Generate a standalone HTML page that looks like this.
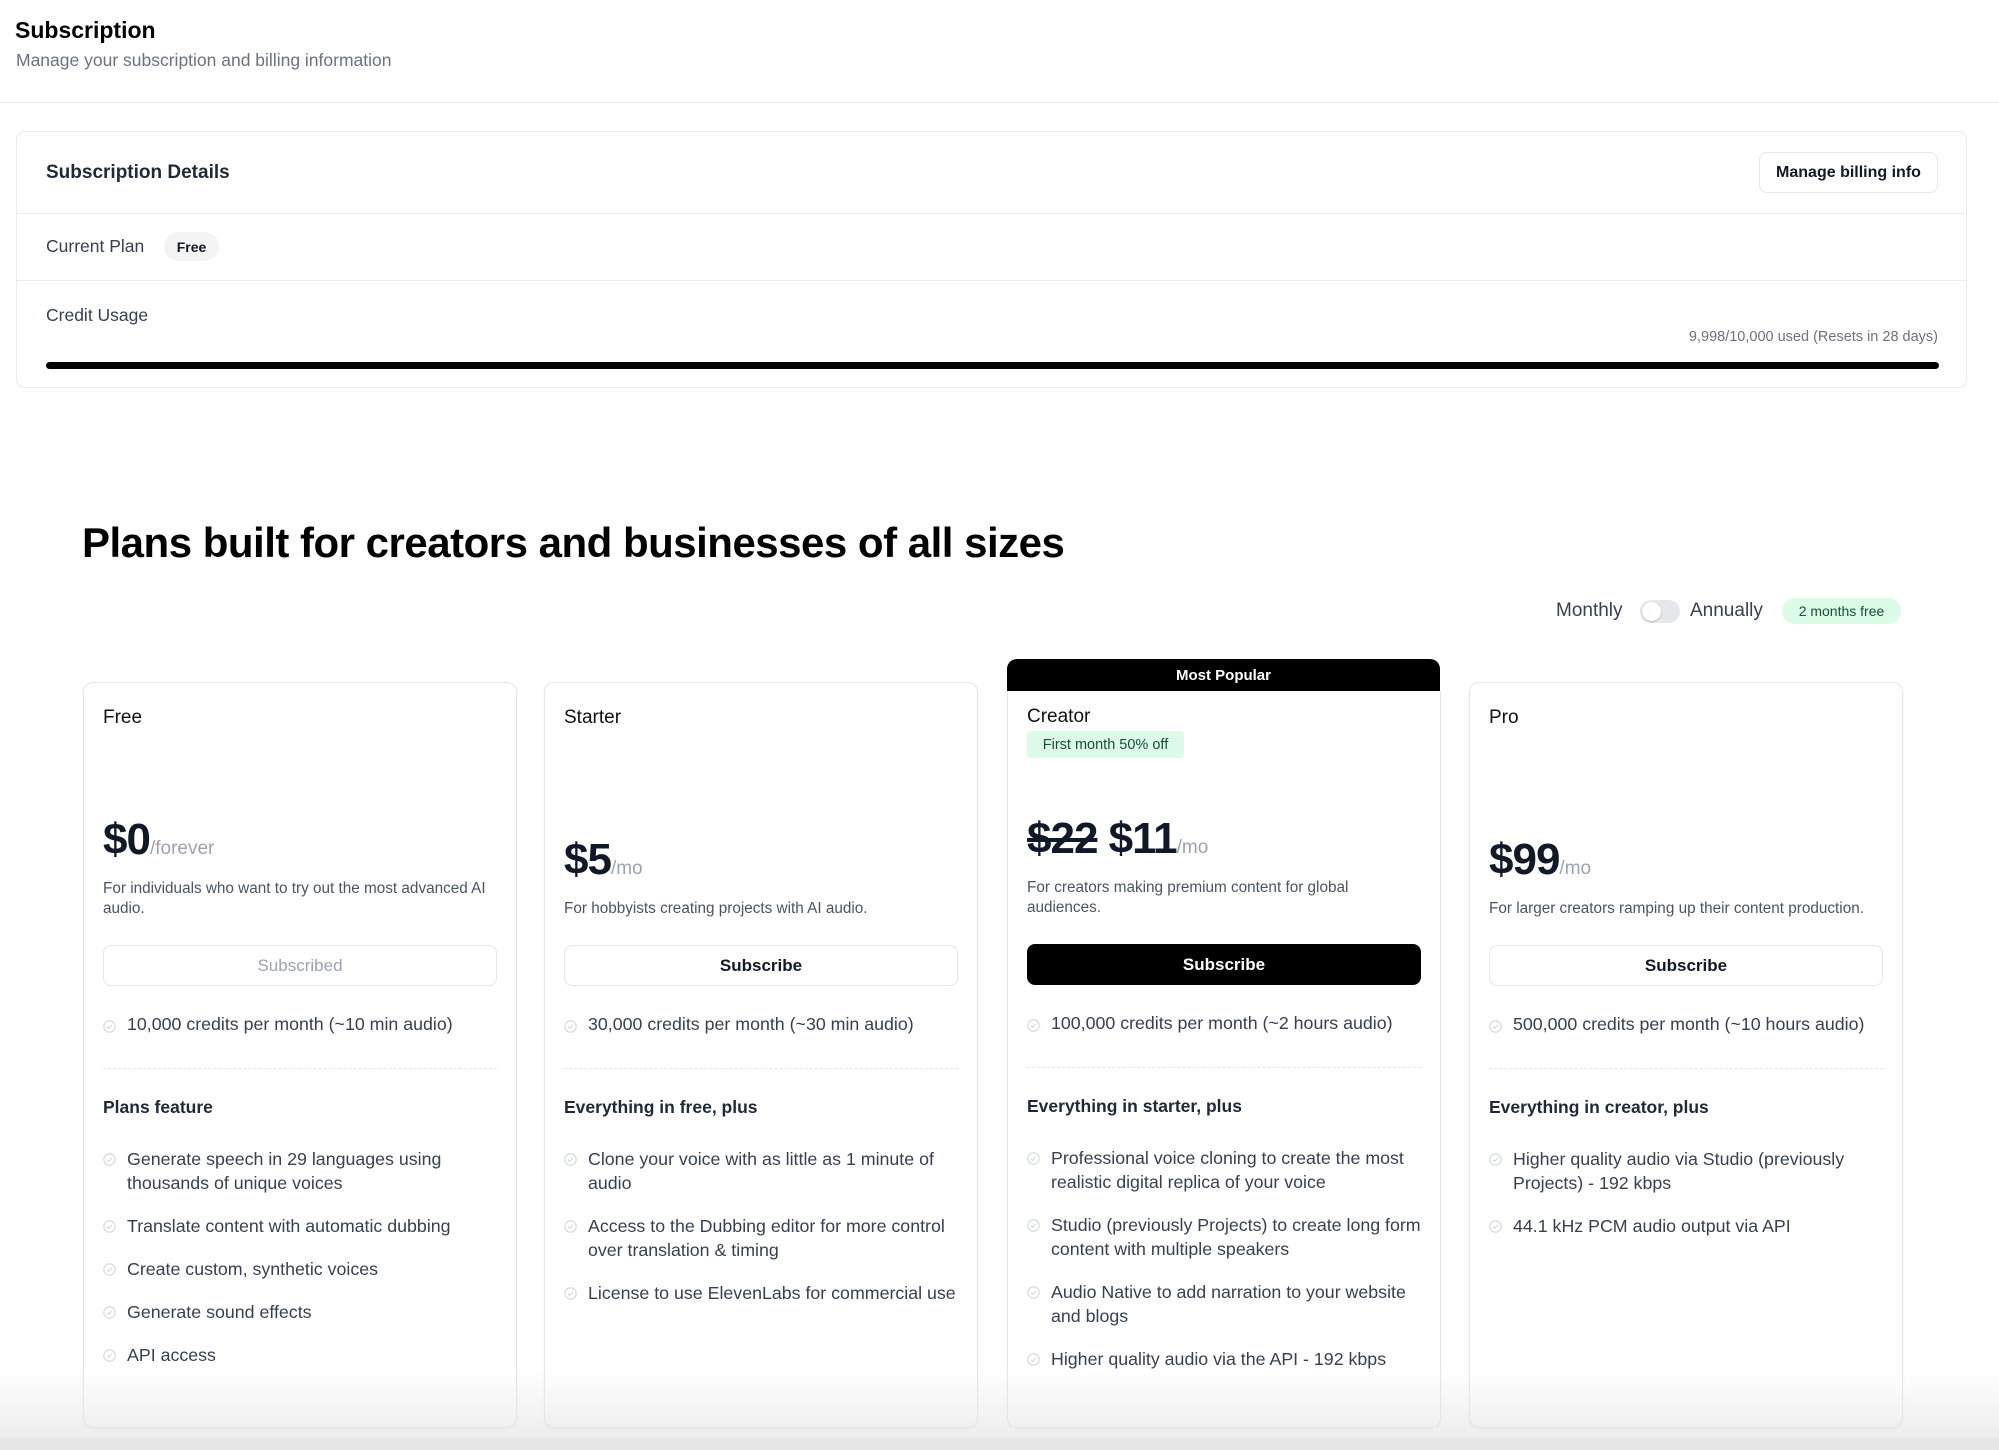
<!DOCTYPE html>
<html><head><meta charset="utf-8"><style>
*{box-sizing:border-box;margin:0;padding:0}
body{width:1999px;height:1450px;background:#fff;font-family:"Liberation Sans",sans-serif;color:#111827;position:relative;overflow:hidden}
.abs{position:absolute}
.h1{left:15px;top:17px;font-size:23px;font-weight:bold;color:#000}
.sub{left:16px;top:50px;font-size:17.5px;color:#6b7280}
.hr{left:0;top:102px;width:1999px;height:1px;background:#ececec}
.box{left:16px;top:131px;width:1951px;height:257px;border:1px solid #ececec;border-radius:9px}
.btn1{left:1759px;top:152px;width:179px;height:41px;border:1px solid #e5e7eb;border-radius:8px;font-size:16px;font-weight:bold;display:flex;align-items:center;justify-content:center}
.card{position:absolute;top:682px;width:434px;height:746px;border:1px solid #e5e7eb;border-radius:10px;background:#fff;box-shadow:0 1px 3px rgba(0,0,0,.05)}
.name{position:absolute;left:19px;top:24px;font-size:19px;color:#111}
.pa{position:absolute;left:19px;right:19px;top:100px;height:136px;display:flex;flex-direction:column;justify-content:flex-end}
.price{font-size:44px;font-weight:bold;letter-spacing:-1px;line-height:50px;margin-bottom:5px}
.price span{font-size:19px;font-weight:normal;color:#9ca3af;letter-spacing:0}
.desc{font-size:15.3px;color:#4b5563;line-height:20px;max-width:395px}
.sb{position:absolute;left:19px;right:19px;top:262px;height:41px;border:1px solid #e5e7eb;border-radius:8px;display:flex;align-items:center;justify-content:center;font-size:17px;font-weight:bold}
.cr{position:absolute;left:19px;top:331px;font-size:17.8px;color:#374151}
.dv{position:absolute;left:19px;right:19px;top:385px;border-top:1px dashed #e5e7eb}
.st{position:absolute;left:19px;top:414px;font-size:17.5px;font-weight:bold;color:#1f2937}
.fl{position:absolute;left:19px;right:19px;top:464px}
.fl div,.cr{padding-left:24px;position:absolute}
.fl div{position:relative;font-size:17.8px;color:#374151;line-height:24px;margin-bottom:19px}
.ic{position:absolute;left:0;top:6px;width:13px;height:13px}
</style></head><body>
<div class="abs h1">Subscription</div>
<div class="abs sub">Manage your subscription and billing information</div>
<div class="abs hr"></div>
<div class="abs box">
 <div class="abs" style="left:29px;top:30px;font-size:19px;font-weight:bold;color:#1f2937">Subscription Details</div>
 <div class="abs" style="left:0;top:81px;width:100%;height:1px;background:#ececec"></div>
 <div class="abs" style="left:29px;top:104px;font-size:17.5px;color:#374151">Current Plan</div>
 <div class="abs" style="left:147px;top:100px;width:55px;height:29px;border-radius:15px;background:#f3f4f6;font-size:14px;font-weight:bold;display:flex;align-items:center;justify-content:center">Free</div>
 <div class="abs" style="left:0;top:148px;width:100%;height:1px;background:#ececec"></div>
 <div class="abs" style="left:29px;top:173px;font-size:17.5px;color:#374151">Credit Usage</div>
 <div class="abs" style="right:28px;top:197px;font-size:14.5px;color:#6b7280">9,998/10,000 used (Resets in 28 days)</div>
 <div class="abs" style="left:29px;top:230px;width:1893px;height:7px;border-radius:4px;background:#000"></div>
</div>
<div class="abs btn1">Manage billing info</div>

<div class="abs" style="left:82px;top:519px;font-size:42px;font-weight:bold;color:#000;letter-spacing:-0.5px">Plans built for creators and businesses of all sizes</div>
<div class="abs" style="left:1556px;top:600px;font-size:19px;color:#374151">Monthly</div>
<div class="abs" style="left:1640px;top:600px;width:40px;height:23px;border-radius:12px;background:#e5e7eb"><div style="position:absolute;left:2px;top:2px;width:19px;height:19px;border-radius:50%;background:#fff;box-shadow:0 1px 2px rgba(0,0,0,.2)"></div></div>
<div class="abs" style="left:1690px;top:600px;font-size:19px;color:#374151">Annually</div>
<div class="abs" style="left:1782px;top:598px;width:119px;height:26px;border-radius:13px;background:#dcfce7;color:#14532d;font-size:14px;display:flex;align-items:center;justify-content:center">2 months free</div>

<svg width="0" height="0" style="position:absolute"><defs><symbol id="ck" viewBox="0 0 16 16"><circle cx="8" cy="8" r="7" fill="none" stroke="#d1d5db" stroke-width="1.3"/><path d="M5 8.3l2 2 4-4.2" fill="none" stroke="#d1d5db" stroke-width="1.3"/></symbol></defs></svg>

<div class="card" style="left:83px">
 <div class="name">Free</div>
 <div class="pa"><div class="price">$0<span>/forever</span></div><div class="desc">For individuals who want to try out the most advanced AI audio.</div></div>
 <div class="sb" style="color:#9ca3af;font-weight:normal">Subscribed</div>
 <div class="cr"><svg class="ic"><use href="#ck"/></svg>10,000 credits per month (~10 min audio)</div>
 <div class="dv"></div><div class="st">Plans feature</div>
 <div class="fl"><div><svg class="ic"><use href="#ck"/></svg>Generate speech in 29 languages using thousands of unique voices</div><div><svg class="ic"><use href="#ck"/></svg>Translate content with automatic dubbing</div><div><svg class="ic"><use href="#ck"/></svg>Create custom, synthetic voices</div><div><svg class="ic"><use href="#ck"/></svg>Generate sound effects</div><div><svg class="ic"><use href="#ck"/></svg>API access</div></div>
</div>
<div class="card" style="left:544px">
 <div class="name">Starter</div>
 <div class="pa"><div class="price">$5<span>/mo</span></div><div class="desc">For hobbyists creating projects with AI audio.</div></div>
 <div class="sb">Subscribe</div>
 <div class="cr"><svg class="ic"><use href="#ck"/></svg>30,000 credits per month (~30 min audio)</div>
 <div class="dv"></div><div class="st">Everything in free, plus</div>
 <div class="fl"><div><svg class="ic"><use href="#ck"/></svg>Clone your voice with as little as 1 minute of audio</div><div><svg class="ic"><use href="#ck"/></svg>Access to the Dubbing editor for more control over translation &amp; timing</div><div><svg class="ic"><use href="#ck"/></svg>License to use ElevenLabs for commercial use</div></div>
</div>
<div class="abs" style="left:1007px;top:659px;width:433px;height:40px;background:#000;border-radius:10px 10px 0 0;color:#fff;font-size:15px;font-weight:bold;text-align:center;padding-top:8px">Most Popular</div>
<div class="card" style="left:1007px;top:691px;height:737px;border-top:none;border-radius:0 0 10px 10px">
 <div style="position:absolute;left:0;top:-9px;width:100%;height:100%">
 <div class="name">Creator</div>
 <div class="abs" style="left:19px;top:49px;width:157px;height:27px;background:#dcfce7;color:#14532d;border-radius:4px;font-size:14.5px;display:flex;align-items:center;justify-content:center">First month 50% off</div>
 <div class="pa"><div class="price"><s>$22</s> $11<span>/mo</span></div><div class="desc" style="max-width:340px">For creators making premium content for global audiences.</div></div>
 <div class="sb" style="background:#000;color:#fff;border-color:#000">Subscribe</div>
 <div class="cr"><svg class="ic"><use href="#ck"/></svg>100,000 credits per month (~2 hours audio)</div>
 <div class="dv"></div><div class="st">Everything in starter, plus</div>
 <div class="fl"><div><svg class="ic"><use href="#ck"/></svg>Professional voice cloning to create the most realistic digital replica of your voice</div><div><svg class="ic"><use href="#ck"/></svg>Studio (previously Projects) to create long form content with multiple speakers</div><div><svg class="ic"><use href="#ck"/></svg>Audio Native to add narration to your website and blogs</div><div><svg class="ic"><use href="#ck"/></svg>Higher quality audio via the API - 192 kbps</div></div>
 </div>
</div>
<div class="card" style="left:1469px">
 <div class="name">Pro</div>
 <div class="pa"><div class="price">$99<span>/mo</span></div><div class="desc">For larger creators ramping up their content production.</div></div>
 <div class="sb">Subscribe</div>
 <div class="cr"><svg class="ic"><use href="#ck"/></svg>500,000 credits per month (~10 hours audio)</div>
 <div class="dv"></div><div class="st">Everything in creator, plus</div>
 <div class="fl"><div><svg class="ic"><use href="#ck"/></svg>Higher quality audio via Studio (previously Projects) - 192 kbps</div><div><svg class="ic"><use href="#ck"/></svg>44.1 kHz PCM audio output via API</div></div>
</div>
<div class="abs" style="left:0;top:1370px;width:1999px;height:80px;background:linear-gradient(to bottom,rgba(230,230,230,0),rgba(225,225,225,.6) 85%,#e6e6e6 85%)"></div>
</body></html>
